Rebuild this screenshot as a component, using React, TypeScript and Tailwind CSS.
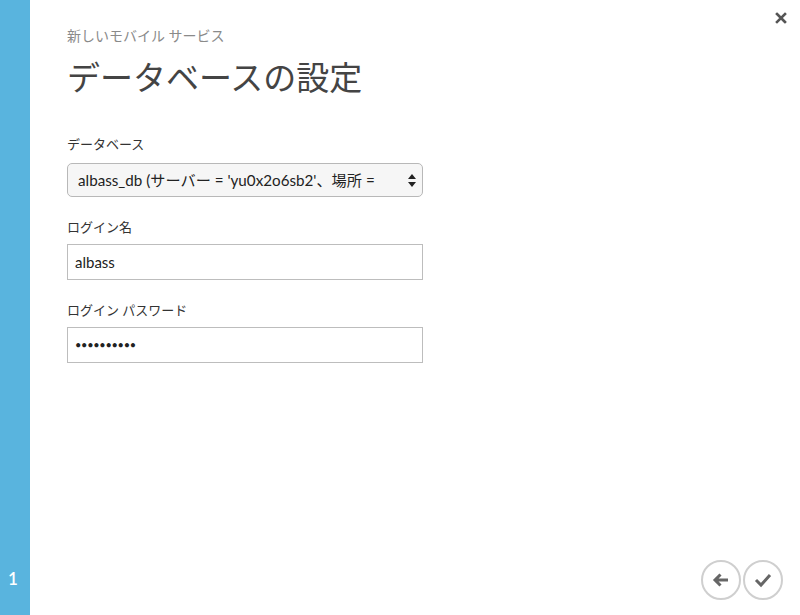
import React from "react";

const font = "font-['Lato','Noto_Sans_CJK_JP',sans-serif]";

export default function App() {
  return (
    <div className={`flex h-[615px] w-[800px] bg-white ${font}`}>
      <aside className="flex w-[30px] shrink-0 flex-col justify-end bg-[#59b4de] pb-[24px]">
        <span className="pl-[8px] text-[17px] font-semibold text-white">1</span>
      </aside>

      <main className="relative flex flex-1 flex-col pl-[37px] pt-[27px]">
        <button className="absolute right-[13px] top-[12px] text-[#555]">
          <svg width="12" height="12" viewBox="0 0 12 12">
            <path d="M2 2l8 8M10 2l-8 8" stroke="currentColor" strokeWidth="2.6" strokeLinecap="square" />
          </svg>
        </button>

        <p className="text-[14px] leading-[18px] text-[#8a8a8a]">新しいモバイル サービス</p>
        <h1 className="mt-[11px] text-[33px] leading-[42px] text-[#444]">データベースの設定</h1>

        <label className="mt-[37px] text-[13px] leading-[18px] text-[#333]">データベース</label>
        <div className="mt-[10px] flex h-[34px] w-[356px] items-center justify-between rounded-[5px] border border-[#b8b8b8] bg-[#f6f6f6] pl-[10px] pr-[6px]">
          <span className="truncate text-[15.2px] text-[#222]">albass_db (サーバー = 'yu0x2o6sb2'、場所 =</span>
          <svg width="8" height="13" viewBox="0 0 8 13" className="ml-[10px] shrink-0">
            <path d="M4 0L8 5H0z M4 13L8 8H0z" fill="#222" />
          </svg>
        </div>

        <label className="mt-[21px] text-[13px] leading-[18px] text-[#333]">ログイン名</label>
        <div className="mt-[8px] flex h-[36px] w-[356px] items-center border border-[#bdbdbd] bg-white px-[7px]">
          <span className="text-[15px] text-[#222]">albass</span>
        </div>

        <label className="mt-[21px] text-[13px] leading-[18px] text-[#333]">ログイン パスワード</label>
        <div className="mt-[8px] flex h-[36px] w-[356px] items-center border border-[#bdbdbd] bg-white px-[7px]">
          <span className="text-[11px] tracking-[-0.3px] text-[#222]">••••••••••</span>
        </div>

        <div className="mt-auto flex justify-end gap-[2px] pb-[15px] pr-[17px]">
          <button className="flex h-[40px] w-[40px] items-center justify-center rounded-full border-2 border-[#cfcfcf] text-[#666]">
            <svg width="18" height="16" viewBox="0 0 18 16">
              <path d="M16 8H3M8.5 2.5L3 8l5.5 5.5" fill="none" stroke="currentColor" strokeWidth="3" />
            </svg>
          </button>
          <button className="flex h-[40px] w-[40px] items-center justify-center rounded-full border-2 border-[#cfcfcf] text-[#666]">
            <svg width="18" height="16" viewBox="0 0 18 16">
              <path d="M2 8l5 5L16 3" fill="none" stroke="currentColor" strokeWidth="3" />
            </svg>
          </button>
        </div>
      </main>
    </div>
  );
}
